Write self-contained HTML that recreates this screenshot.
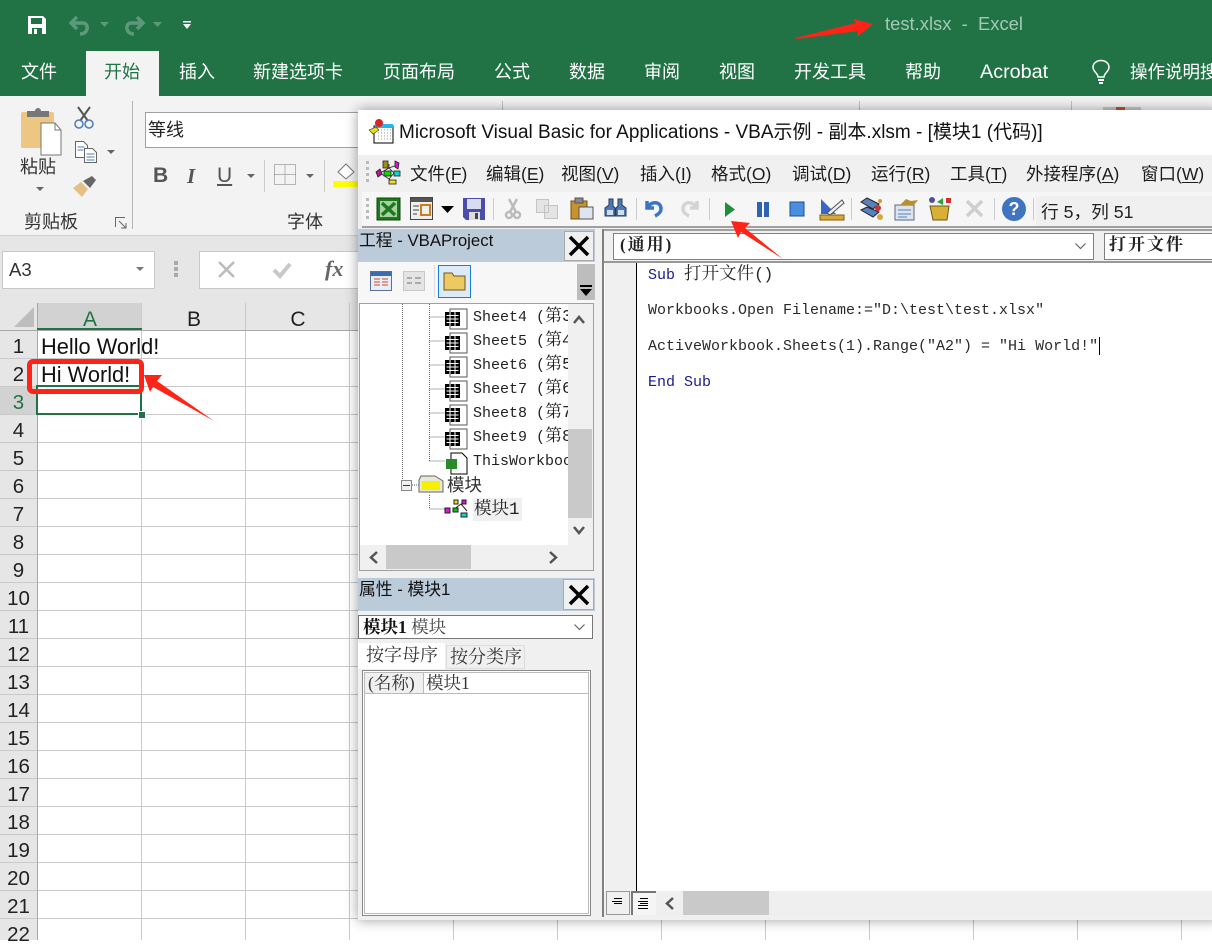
<!DOCTYPE html>
<html><head><meta charset="utf-8"><style>
html,body{margin:0;padding:0}
body{width:1212px;height:940px;overflow:hidden;position:relative;background:#fff;font-family:"Liberation Sans","Noto Sans CJK SC",sans-serif;color:#222}
.a{position:absolute}
.t{position:absolute;white-space:nowrap}
.tab{color:#fff;font-size:18px;line-height:24px;top:60px}
.m{font-family:"Liberation Mono","Noto Serif CJK SC",monospace;font-size:15px;line-height:20px}
.menu{font-size:17.5px;line-height:24px;top:162px;color:#1c1c1c}
.menu u{text-underline-offset:2px}
.code{left:648px;color:#2a2a2a}
.row{left:0;width:37px;text-align:center;font-size:20.5px;line-height:28px;color:#222;height:28px;font-family:"Liberation Sans","Noto Sans CJK SC",sans-serif}
svg{position:absolute;overflow:visible}
</style></head><body>
<!-- title bar -->
<div class="a" style="left:0;top:0;width:1212px;height:96px;background:#217346"></div>
<svg style="left:26px;top:15px" width="22" height="20" viewBox="0 0 20 20"><path d="M1 1h15l3 3v15H1z" fill="#fff"/><path d="M4 3h11v6H4z" fill="#217346"/><path d="M5 13h10v6H5z" fill="#217346"/><path d="M7 14h3v5H7z" fill="#fff"/></svg>
<svg style="left:68px;top:15px" width="24" height="21" viewBox="0 0 24 21" fill="none" stroke="#5a9a7a" stroke-width="3.5"><path d="M9 2L3 8l6 6M3 8h12c6 0 6 11-3 11"/></svg>
<svg style="left:100px;top:22px" width="9" height="6"><path d="M0 0h9L4.500 5z" fill="#5a9a7a"/></svg>
<svg style="left:122px;top:15px" width="24" height="21" viewBox="0 0 24 21" fill="none" stroke="#5a9a7a" stroke-width="3.500"><path d="M15 2l6 6-6 6M21 8H9c-6 0-6 11 3 11"/></svg>
<svg style="left:153px;top:22px" width="9" height="6"><path d="M0 0h9L4.500 5z" fill="#5a9a7a"/></svg>
<svg style="left:183px;top:21px" width="8" height="9"><path d="M0 0h8v1.500H0zM0 3h8L4 8z" fill="#fff"/></svg>
<span class="t" style="left:885px;top:12px;font-size:18.400px;line-height:24px;color:#a3c9b5;white-space:pre">test.xlsx  -  Excel</span>
<div class="a" style="left:86px;top:51px;width:73px;height:45px;background:#f3f3f3"></div>
<span class="t tab" style="left:21px">文件</span>
<span class="t tab" style="left:104px;color:#217346">开始</span>
<span class="t tab" style="left:179px">插入</span>
<span class="t tab" style="left:253px">新建选项卡</span>
<span class="t tab" style="left:383px">页面布局</span>
<span class="t tab" style="left:494px">公式</span>
<span class="t tab" style="left:569px">数据</span>
<span class="t tab" style="left:644px">审阅</span>
<span class="t tab" style="left:719px">视图</span>
<span class="t tab" style="left:794px">开发工具</span>
<span class="t tab" style="left:905px">帮助</span>
<span class="t tab" style="left:980px;font-size:19.800px">Acrobat</span>
<span class="t tab" style="left:1130px;font-size:17.500px">操作说明搜索</span>
<svg style="left:1091px;top:60px" width="20" height="26" viewBox="0 0 20 26" fill="none" stroke="#fff" stroke-width="1.500"><path d="M7 17c0-4-5-5-5-10a8 6.500 0 0 1 16 0c0 5-5 6-5 10z"/><path d="M7 20h6M8 23h4" stroke-width="2"/></svg>
<!-- ribbon -->
<div class="a" style="left:0;top:96px;width:1212px;height:140px;background:#f3f3f3;border-bottom:1px solid #d2d2d2;box-sizing:border-box"></div>
<div class="a" style="left:132px;top:101px;width:1px;height:128px;background:#b5b5b5"></div>
<div class="a" style="left:502px;top:101px;width:1px;height:10px;background:#c0c0c0"></div>
<div class="a" style="left:859px;top:101px;width:1px;height:10px;background:#c0c0c0"></div>
<div class="a" style="left:1071px;top:101px;width:1px;height:10px;background:#c0c0c0"></div>
<div class="a" style="left:1103px;top:107px;width:38px;height:4px;background:#c9c9c9"></div>
<div class="a" style="left:1116px;top:107px;width:9px;height:4px;background:#c5512f"></div>
<svg style="left:20px;top:106px" width="44" height="48" viewBox="0 0 44 48"><rect x="1" y="6" width="33" height="36" rx="2" fill="#edc681"/><path d="M7 5h8a3 3 0 0 1 6 0h8v6H7z" fill="#777"/><path d="M21 19h14l6 7v25H21z" transform="translate(0 -2)" fill="#fff" stroke="#777"/><path d="M35 17v7h6" fill="none" stroke="#777"/></svg>
<span class="t" style="left:20px;top:155px;font-size:18px;line-height:24px;color:#333">粘贴</span>
<svg style="left:36px;top:187px" width="9" height="6"><path d="M0 0h8L4 4z" fill="#666"/></svg>
<svg style="left:73px;top:105px" width="22" height="24" viewBox="0 0 22 24" fill="none"><path d="M5 2l10 14M17 2L7 16" stroke="#555" stroke-width="2"/><circle cx="6" cy="19" r="4" stroke="#4b7db5" stroke-width="1.500"/><circle cx="16" cy="19" r="4" stroke="#4b7db5" stroke-width="1.500"/></svg>
<svg style="left:74px;top:140px" width="24" height="24" viewBox="0 0 24 24" fill="#fff" stroke="#666"><path d="M1.500 1.500h8l4 4v12h-12z"/><path d="M10.500 8.500h8l4 4v10h-12z"/><path d="M3.500 7h7M3.500 10h6M12.500 14h8M12.500 17h8M12.500 20h8" stroke="#4b7db5"/></svg>
<svg style="left:107px;top:150px" width="8" height="6"><path d="M0 0h8L4 4z" fill="#666"/></svg>
<svg style="left:73px;top:176px" width="24" height="22" viewBox="0 0 24 22"><path d="M0 12l8-6 7 7-6 8z" fill="#e6bf82"/><path d="M10 5l9-5 4 4-6 8z" fill="#666"/></svg>
<span class="t" style="left:24px;top:211px;font-size:18px;line-height:22px;color:#333">剪贴板</span>
<svg style="left:115px;top:217px" width="12" height="12" fill="none" stroke="#666"><path d="M.5 10V.5H10M4 4l7 7M11 6v5H6"/></svg>
<div class="a" style="left:145px;top:112px;width:230px;height:34px;background:#fff;border:1px solid #a0a0a0"></div>
<span class="t" style="left:148px;top:118px;font-size:18px;line-height:24px;color:#222">等线</span>
<span class="t" style="left:153px;top:163px;font-size:21px;line-height:26px;font-weight:bold;color:#555">B</span>
<span class="t" style="left:187px;top:163px;font-size:21px;line-height:26px;font-style:italic;font-family:'Liberation Serif',serif;font-weight:bold;color:#555">I</span>
<span class="t" style="left:217px;top:163px;font-size:21px;line-height:26px;color:#555;text-decoration:underline">U</span>
<svg style="left:247px;top:174px" width="8" height="5"><path d="M0 0h8L4 4z" fill="#666"/></svg>
<div class="a" style="left:264px;top:160px;width:1px;height:32px;background:#ccc"></div>
<svg style="left:274px;top:164px" width="22" height="21" fill="none" stroke="#777" stroke-dasharray="1 1"><path d="M.5.500h21v20H.500zM11 .5v20M.5 10.500h21"/></svg>
<svg style="left:306px;top:174px" width="8" height="5"><path d="M0 0h8L4 4z" fill="#666"/></svg>
<div class="a" style="left:324px;top:160px;width:1px;height:32px;background:#ccc"></div>
<svg style="left:336px;top:162px" width="22" height="18" fill="none" stroke="#777"><path d="M2 10l8-8 8 8-8 7z" fill="#fff"/></svg>
<div class="a" style="left:333px;top:181px;width:26px;height:6px;background:#ffff00"></div>
<span class="t" style="left:287px;top:210px;font-size:18px;line-height:24px;color:#333">字体</span>
<!-- formula bar -->
<div class="a" style="left:0;top:236px;width:1212px;height:67px;background:#e6e6e6"></div>
<div class="a" style="left:2px;top:251px;width:151px;height:36px;background:#fff;border:1px solid #c8c8c8"></div>
<span class="t" style="left:9px;top:258px;font-size:18.500px;line-height:24px;color:#333">A3</span>
<svg style="left:136px;top:267px" width="9" height="6"><path d="M0 0h8L4 4z" fill="#777"/></svg>
<div class="a" style="left:174px;top:261px;width:4px;height:4px;background:#aaa;box-shadow:0 6px 0 #aaa,0 12px 0 #aaa"></div>
<div class="a" style="left:199px;top:251px;width:170px;height:36px;background:#fff;border:1px solid #c8c8c8"></div>
<svg style="left:218px;top:261px" width="18" height="17" stroke="#bbb" stroke-width="2.500"><path d="M1 1l15 15M16 1L1 16"/></svg>
<svg style="left:272px;top:262px" width="20" height="17" fill="none" stroke="#c8c8c8" stroke-width="4"><path d="M2 8l6 6L18 2"/></svg>
<span class="t" style="left:325px;top:256px;font-family:'Liberation Serif',serif;font-style:italic;font-weight:bold;font-size:22px;line-height:26px;color:#666">fx</span>
<!-- grid -->
<svg style="left:0;top:303px" width="1212" height="637" shape-rendering="crispEdges">
<rect width="1212" height="27" fill="#e6e6e6"/>
<rect width="37" height="637" fill="#e6e6e6"/>
<rect x="37" width="104" height="27" fill="#d2d2d2"/>
<rect y="83" width="37" height="28" fill="#d2d2d2"/>
<g stroke="#c9c9c9"><path d="M37.500 27V637M141.500 0V637M245.500 0V637M349.500 0V637M453.500 0V637M557.500 0V637M661.500 0V637M765.500 0V637M869.500 0V637M973.500 0V637M1077.500 0V637M1181.500 0V637"/>
<path d="M0 55.500H1212M0 83.500H1212M0 111.500H1212M0 139.500H1212M0 167.500H1212M0 195.500H1212M0 223.500H1212M0 251.500H1212M0 279.500H1212M0 307.500H1212M0 335.500H1212M0 363.500H1212M0 391.500H1212M0 419.500H1212M0 447.500H1212M0 475.500H1212M0 503.500H1212M0 531.500H1212M0 559.500H1212M0 587.500H1212M0 615.500H1212"/></g>
<path d="M0 27.500H1212" stroke="#a8a8a8"/>
<path d="M37.500 0V637" stroke="#a8a8a8"/>
<rect x="37" y="25" width="105" height="2" fill="#217346"/>
<path d="M34 4v20H14z" fill="#bdbdbd" shape-rendering="auto"/>
</svg>
<span class="t" style="left:38px;top:306px;width:104px;text-align:center;font-size:21px;line-height:27px;color:#217346">A</span>
<span class="t" style="left:142px;top:306px;width:104px;text-align:center;font-size:21px;line-height:27px">B</span>
<span class="t" style="left:246px;top:306px;width:104px;text-align:center;font-size:21px;line-height:27px">C</span>
<span class="t row" style="top:333px">1</span><span class="t row" style="top:361px">2</span><span class="t row" style="top:389px;color:#217346">3</span><span class="t row" style="top:417px">4</span><span class="t row" style="top:445px">5</span><span class="t row" style="top:473px">6</span><span class="t row" style="top:501px">7</span><span class="t row" style="top:529px">8</span><span class="t row" style="top:557px">9</span><span class="t row" style="top:585px">10</span><span class="t row" style="top:613px">11</span><span class="t row" style="top:641px">12</span><span class="t row" style="top:669px">13</span><span class="t row" style="top:697px">14</span><span class="t row" style="top:725px">15</span><span class="t row" style="top:753px">16</span><span class="t row" style="top:781px">17</span><span class="t row" style="top:809px">18</span><span class="t row" style="top:837px">19</span><span class="t row" style="top:865px">20</span><span class="t row" style="top:893px">21</span><span class="t row" style="top:921px">22</span>
<span class="t" style="left:41px;top:333px;font-size:21.800px;line-height:28px;color:#111">Hello World!</span>
<span class="t" style="left:41px;top:361px;font-size:21.800px;line-height:28px;color:#111">Hi World!</span>
<div class="a" style="left:36px;top:385px;width:106px;height:30px;border:2px solid #217346;box-sizing:border-box"></div>
<div class="a" style="left:138px;top:411px;width:6px;height:6px;background:#217346;border:1px solid #fff"></div>
<div class="a" style="left:27px;top:359px;width:117px;height:35px;border:5px solid #ff2318;border-radius:6px;box-sizing:border-box"></div>
<svg style="left:0;top:0" width="1212" height="940"><path d="M144 375L162 375L157 381L214 421L153 387L150 392z" fill="#ff2318"/></svg>
<!-- VBA window -->
<div class="a" style="left:358px;top:110px;width:860px;height:810px;background:#f0f0f0;box-shadow:0 0 12px rgba(0,0,0,.4)"></div>
<div class="a" style="left:358px;top:110px;width:854px;height:45px;background:#fff"></div>
<svg style="left:369px;top:119px" width="26" height="26" viewBox="0 0 26 26"><rect x="5" y="7" width="19" height="17" fill="#fff" stroke="#000"/><rect x="6" y="5" width="18" height="4" fill="#22b8ec"/><path d="M9 11h14M9 14h14M9 17h14M9 20h14" stroke="#999" stroke-dasharray="1 2"/><circle cx="10" cy="4" r="4" fill="#d22"/><path d="M0 11l7-3 3 3-6 4z" fill="#e8d820" stroke="#333" stroke-width=".6"/></svg>
<span class="t" style="left:399px;top:120px;font-size:19px;line-height:25px;color:#111">Microsoft Visual Basic for Applications - VBA示例 - 副本.xlsm - [模块1 (代码)]</span>
<div class="a" style="left:358px;top:155px;width:854px;height:36px;background:#f0f0f0"></div>
<div class="a" style="left:366px;top:161px;width:3px;height:3px;background:#bbb;box-shadow:0 6px 0 #bbb,0 12px 0 #bbb,0 18px 0 #bbb"></div>
<svg style="left:374px;top:160px" width="27" height="25" viewBox="0 0 27 25" stroke="#222" stroke-width=".8"><path d="M6 13L15 8l5 5-5 6zM15 8V4M15 8l8-3M20 13h4M15 19l4 3" fill="none"/><path d="M2 12l4-3 2 5-4 3z" fill="#c010a0"/><rect x="9" y="1" width="5" height="7" fill="#a09010"/><path d="M21 1l4 2-1 6-3-2z" fill="#e010e0"/><rect x="10" y="11" width="7" height="5" fill="#10d010"/><rect x="20" y="11" width="6" height="5" fill="#10d0d0"/><rect x="15" y="20" width="7" height="4" fill="#e8e020"/></svg>
<span class="t menu" style="left:410px">文件(<u>F</u>)</span>
<span class="t menu" style="left:486px">编辑(<u>E</u>)</span>
<span class="t menu" style="left:561px">视图(<u>V</u>)</span>
<span class="t menu" style="left:640px">插入(<u>I</u>)</span>
<span class="t menu" style="left:711px">格式(<u>O</u>)</span>
<span class="t menu" style="left:792px">调试(<u>D</u>)</span>
<span class="t menu" style="left:871px">运行(<u>R</u>)</span>
<span class="t menu" style="left:950px">工具(<u>T</u>)</span>
<span class="t menu" style="left:1026px">外接程序(<u>A</u>)</span>
<span class="t menu" style="left:1141px">窗口(<u>W</u>)</span>
<!-- toolbar -->
<div class="a" style="left:362px;top:192px;width:850px;height:36px;background:#f6f6f6;border-bottom:2px solid #a0a0a0;box-sizing:border-box"></div>
<div class="a" style="left:1036px;top:196px;width:176px;height:30px;background:#f0f0f0"></div>
<div class="a" style="left:366px;top:198px;width:3px;height:3px;background:#bbb;box-shadow:0 6px 0 #bbb,0 12px 0 #bbb,0 18px 0 #bbb"></div>
<svg style="left:376px;top:197px" width="25" height="24" viewBox="0 0 25 24"><rect x="1" y="1" width="23" height="22" fill="#1c7a1c" stroke="#0a4a0a"/><rect x="4" y="4" width="17" height="16" fill="#a8cfa8"/><path d="M6 6l13 12M19 6L6 18" stroke="#1c7a1c" stroke-width="3.500"/></svg>
<svg style="left:410px;top:197px" width="23" height="23" viewBox="0 0 23 23"><rect x=".5" y=".5" width="22" height="22" fill="#efefef" stroke="#444"/><rect x="1" y="1" width="21" height="4" fill="#555"/><path d="M3 9h6M3 13h6M3 17h4" stroke="#999" stroke-width="2"/><rect x="11" y="8" width="9" height="10" fill="none" stroke="#c87f20" stroke-width="2"/></svg>
<svg style="left:441px;top:206px" width="13" height="7"><path d="M0 0h13L6.500 7z" fill="#000"/></svg>
<svg style="left:463px;top:198px" width="22" height="22" viewBox="0 0 22 22"><path d="M0 0h22v22H3L0 19z" fill="#4a4ea8"/><rect x="4" y="1" width="14" height="10" fill="#d8dcf0"/><rect x="6" y="14" width="11" height="8" fill="#ddd"/><rect x="12" y="15" width="3" height="6" fill="#444"/></svg>
<div class="a" style="left:493px;top:198px;width:1px;height:22px;background:#ccc"></div>
<svg style="left:505px;top:198px" width="16" height="22" fill="none" stroke="#bbb" stroke-width="2.500"><path d="M4 1l7 13M12 1L5 14"/><circle cx="4" cy="17" r="3"/><circle cx="12" cy="17" r="3"/></svg>
<svg style="left:536px;top:199px" width="22" height="20" fill="#e4e4e4" stroke="#c4c4c4"><path d="M.5.500h12v13H.500zM8.500 6.500h13v13h-13z"/></svg>
<svg style="left:570px;top:198px" width="24" height="22" viewBox="0 0 24 22"><rect x="1" y="3" width="16" height="18" fill="#c8922e" stroke="#705010"/><rect x="5" y="0" width="8" height="5" fill="#888" stroke="#555"/><rect x="9" y="9" width="14" height="12" fill="#dfe5ee" stroke="#555"/></svg>
<svg style="left:604px;top:198px" width="23" height="22" viewBox="0 0 23 22"><path d="M5 1h4v7l2 2v8H1v-8l4-3zM14 1h4v6l4 3v8H12v-8l2-2z" fill="#5078b0" stroke="#223a66"/><rect x="3" y="12" width="6" height="5" fill="#cde"/><rect x="14" y="12" width="6" height="5" fill="#cde"/></svg>
<div class="a" style="left:636px;top:198px;width:1px;height:22px;background:#ccc"></div>
<svg style="left:645px;top:198px" width="20" height="20" fill="none" stroke="#3a76c4" stroke-width="3.500"><path d="M2 3v7h7M3 9c3-6 13-6 13 2 0 3-2 5-6 7"/></svg>
<svg style="left:679px;top:198px" width="20" height="20" fill="none" stroke="#d4d4d4" stroke-width="3.500"><path d="M18 3v7h-7M17 9c-3-6-13-6-13 2 0 3 2 5 6 7"/></svg>
<div class="a" style="left:709px;top:198px;width:1px;height:22px;background:#ccc"></div>
<svg style="left:725px;top:202px" width="10" height="15"><path d="M0 0l10 7.500L0 15z" fill="#1f8f3c"/></svg>
<svg style="left:757px;top:202px" width="13" height="15"><rect x="0" width="5" height="15" fill="#2f62b0"/><rect x="7" width="5" height="15" fill="#2f62b0"/></svg>
<svg style="left:790px;top:202px" width="15" height="15"><rect width="14" height="14" fill="#4a8ee0" stroke="#1f4d95"/></svg>
<svg style="left:819px;top:197px" width="26" height="24" viewBox="0 0 26 24"><rect x="1" y="18" width="24" height="5" fill="#d8a838" stroke="#806010"/><path d="M2 2v15h15z" fill="#3a66c8"/><path d="M8 16L23 3l2 3L11 18z" fill="#eee" stroke="#555"/></svg>
<div class="a" style="left:851px;top:198px;width:1px;height:22px;background:#ccc"></div>
<svg style="left:860px;top:197px" width="24" height="24" viewBox="0 0 24 24"><path d="M1 5l6-4 12 6-6 5zM1 13l6-3 12 5-6 5z" fill="#5a80b8" stroke="#223"/><circle cx="20" cy="4" r="2" fill="#cda02c"/><circle cx="18" cy="11" r="3" fill="#d03030"/><circle cx="20" cy="20" r="3" fill="#d8a838"/></svg>
<svg style="left:894px;top:197px" width="25" height="24" viewBox="0 0 25 24"><rect x="1" y="8" width="19" height="15" fill="#dbe4f0" stroke="#5a6a80"/><path d="M4 13h13M4 17h13M4 20h9" stroke="#5a80b8"/><path d="M6 8l6-6 5 2 7-1-4 5z" fill="#b89030"/></svg>
<svg style="left:927px;top:197px" width="25" height="24" viewBox="0 0 25 24"><path d="M3 9h19l-2 14H6z" fill="#d8b038" stroke="#705a10"/><circle cx="5" cy="3" r="3" fill="#5050a0"/><path d="M10 5l6-4v7z" fill="#2aa040"/><rect x="19" y="1" width="5" height="5" fill="#d03030"/></svg>
<svg style="left:964px;top:198px" width="21" height="20" fill="none" stroke="#cfcfcf" stroke-width="3.500"><path d="M3 3l15 15M18 3L3 18"/></svg>
<div class="a" style="left:994px;top:198px;width:1px;height:22px;background:#ccc"></div>
<div class="t" style="left:1002px;top:197px;width:24px;height:24px;border-radius:50%;background:#3f75c0;color:#fff;font-weight:bold;font-size:18px;line-height:24px;text-align:center">?</div>
<div class="a" style="left:1033px;top:198px;width:1px;height:22px;background:#ccc"></div>
<span class="t" style="left:1041px;top:200px;font-size:17.700px;line-height:24px;color:#222">行 5，列 51</span>
<!-- project pane -->
<div class="a" style="left:358px;top:229px;width:237px;height:33px;background:#bccbda"></div>
<span class="t" style="left:359px;top:230px;font-size:16.800px;line-height:22px;color:#111">工程 - VBAProject</span>
<div class="a" style="left:564px;top:231px;width:30px;height:30px;background:#f0f0f0;border:1px solid #aaa;box-sizing:border-box"></div>
<svg style="left:569px;top:236px" width="20" height="20" stroke="#000" stroke-width="3.500"><path d="M1 1l18 18M19 1L1 19"/></svg>
<div class="a" style="left:358px;top:262px;width:237px;height:41px;background:#f7f7f7"></div>
<svg style="left:370px;top:271px" width="22" height="20" viewBox="0 0 22 20"><rect x=".5" y=".5" width="21" height="19" fill="#e8eef6" stroke="#5a7098"/><rect x="1" y="1" width="20" height="4" fill="#3a6cb0"/><path d="M4 8h6M12 8h6M4 11h6M12 11h6M4 14h6M12 14h6" stroke="#d04a2a"/></svg>
<svg style="left:403px;top:271px" width="22" height="20" viewBox="0 0 22 20" fill="#e4e4e4" stroke="#c8c8c8"><rect x=".5" y=".5" width="21" height="19"/><path d="M4 7h5M12 7h6M4 12h5M12 12h6" stroke="#aaa" stroke-width="2"/></svg>
<div class="a" style="left:434px;top:265px;width:1px;height:32px;background:#ddd"></div>
<div class="a" style="left:438px;top:265px;width:33px;height:33px;background:#dcebf7;border:1px solid #1c7ed0;box-sizing:border-box"></div>
<svg style="left:443px;top:271px" width="23" height="20" viewBox="0 0 23 20"><path d="M1 2h8l2 3h11v14H1z" fill="#eec860" stroke="#6b5a24"/></svg>
<div class="a" style="left:577px;top:264px;width:18px;height:36px;background:#bdbdbd"></div>
<svg style="left:579px;top:285px" width="14" height="12"><path d="M1 0h12v2H1zM1 4h12L7 11z" fill="#000"/></svg>
<div class="a" style="left:359px;top:303px;width:235px;height:268px;background:#f0f0f0;border:1px solid #a0a0a0;box-sizing:border-box"></div>
<div class="a" style="left:360px;top:304px;width:208px;height:241px;background:#fff;overflow:hidden">
<svg style="left:-360px;top:-304px" width="600" height="600" fill="none" stroke="#666" stroke-dasharray="1 1" shape-rendering="crispEdges">
<path d="M402.500 304V479M429.500 304V461M429.500 317H445M429.500 341H445M429.500 365H445M429.500 389H445M429.500 413H445M429.500 437H445M429.500 461H445M412 485H420M429.500 495V509H445"/></svg>
<span class="t m" style="left:113px;top:4px;white-space:pre">Sheet4 (<span style="font-size:17px">第3</span></span>
<span class="t m" style="left:113px;top:28px;white-space:pre">Sheet5 (<span style="font-size:17px">第4</span></span>
<span class="t m" style="left:113px;top:52px;white-space:pre">Sheet6 (<span style="font-size:17px">第5</span></span>
<span class="t m" style="left:113px;top:76px;white-space:pre">Sheet7 (<span style="font-size:17px">第6</span></span>
<span class="t m" style="left:113px;top:100px;white-space:pre">Sheet8 (<span style="font-size:17px">第7</span></span>
<span class="t m" style="left:113px;top:124px;white-space:pre">Sheet9 (<span style="font-size:17px">第8</span></span>
<span class="t m" style="left:113px;top:148px;white-space:pre">ThisWorkbook</span>
<span class="t" style="left:87px;top:170px;font-size:17.500px;line-height:22px;color:#333">模块</span>
<div class="a" style="left:113px;top:194px;width:49px;height:23px;background:#f0f0f0"></div>
<span class="t m" style="left:114px;top:196px;font-size:17.500px">模块1</span>
<svg style="left:85px;top:5px" width="24" height="160" viewBox="0 0 24 160">
<defs><g id="s"><rect x="5" y="0" width="17" height="20" fill="#fff" stroke="#555"/><rect x="0" y="3" width="15" height="14" fill="#000"/><path d="M1.500 6.500h12M1.500 10h12M1.500 13.500h12M5 3v14M10 3v14" stroke="#fff" fill="none"/></g></defs>
<use href="#s"/><use href="#s" y="24"/><use href="#s" y="48"/><use href="#s" y="72"/><use href="#s" y="96"/><use href="#s" y="120"/>
<path d="M6 144h11l5 5v16H6z" fill="#fff" stroke="#000"/><path d="M1 150h11v10H1z" fill="#2a8a2a"/></svg>
<div class="a" style="left:41px;top:176px;width:11px;height:11px;background:#f0f0f0;border:1px solid #888;box-sizing:border-box"></div>
<div class="a" style="left:43px;top:181px;width:7px;height:1px;background:#335"></div>
<svg style="left:58px;top:171px" width="27" height="19"><path d="M3 1h14l8 5v11H1V5z" fill="#e8e8d8" stroke="#666"/><rect x="4" y="6" width="18" height="9" fill="#f5f000"/></svg>
<svg style="left:85px;top:193px" width="24" height="22"><path d="M8 13l8-6 6 7" fill="none" stroke="#222"/><rect x="0" y="11" width="5" height="5" fill="#e010e0" stroke="#222"/><rect x="9" y="3" width="4" height="4" fill="#f0e010" stroke="#222"/><rect x="17" y="3" width="4" height="4" fill="#e010e0" stroke="#222"/><rect x="8" y="11" width="5" height="4" fill="#10c010" stroke="#222"/><rect x="16" y="16" width="6" height="4" fill="#10d0d0" stroke="#222"/></svg>
</div>
<div class="a" style="left:568px;top:429px;width:24px;height:89px;background:#c9c9c9"></div>
<svg style="left:572px;top:315px" width="14" height="9" fill="none" stroke="#555" stroke-width="2.500"><path d="M2 8l5-6 5 6"/></svg>
<svg style="left:572px;top:526px" width="14" height="9" fill="none" stroke="#555" stroke-width="2.500"><path d="M2 1l5 6 5-6"/></svg>
<div class="a" style="left:386px;top:545px;width:85px;height:24px;background:#c9c9c9"></div>
<svg style="left:369px;top:551px" width="10" height="13" fill="none" stroke="#555" stroke-width="2.500"><path d="M8 1L2 6.500 8 12"/></svg>
<svg style="left:548px;top:551px" width="10" height="13" fill="none" stroke="#555" stroke-width="2.500"><path d="M2 1l6 5.500L2 12"/></svg>
<!-- properties -->
<div class="a" style="left:358px;top:578px;width:237px;height:33px;background:#bccbda"></div>
<span class="t" style="left:359px;top:579px;font-size:16.800px;line-height:22px;color:#111">属性 - 模块1</span>
<div class="a" style="left:563px;top:579px;width:31px;height:31px;background:#f0f0f0;border:1px solid #aaa;box-sizing:border-box"></div>
<svg style="left:569px;top:585px" width="20" height="20" stroke="#000" stroke-width="3.500"><path d="M1 1l18 18M19 1L1 19"/></svg>
<div class="a" style="left:358px;top:615px;width:235px;height:24px;background:#fff;border:1px solid #777;box-sizing:border-box"></div>
<span class="t" style="left:363px;top:616px;font-family:'Liberation Serif','Noto Serif CJK SC',serif;font-size:17.500px;line-height:22px;color:#111"><b>模块1</b> <span style="color:#444">模块</span></span>
<svg style="left:574px;top:624px" width="11" height="7" fill="none" stroke="#666" stroke-width="1.200"><path d="M.5.500l5 5 5-5"/></svg>
<div class="a" style="left:358px;top:643px;width:87px;height:26px;background:#fff"></div>
<div class="a" style="left:446px;top:645px;width:79px;height:24px;background:#f0f0f0;border:1px solid #ddd;box-sizing:border-box"></div>
<span class="t" style="left:366px;top:644px;font-family:'Liberation Serif','Noto Serif CJK SC',serif;font-size:18px;line-height:23px;color:#333">按字母序</span>
<span class="t" style="left:450px;top:646px;font-family:'Liberation Serif','Noto Serif CJK SC',serif;font-size:18px;line-height:23px;color:#333">按分类序</span>
<div class="a" style="left:362px;top:670px;width:229px;height:246px;background:#fff;border:1px solid #888;outline:1px solid #bbb;outline-offset:-3px;box-sizing:border-box"></div>
<div class="a" style="left:365px;top:673px;width:58px;height:20px;background:#f0f0f0"></div>
<div class="a" style="left:365px;top:693px;width:223px;height:1px;background:#bbb"></div>
<div class="a" style="left:423px;top:673px;width:1px;height:20px;background:#bbb"></div>
<span class="t" style="left:368px;top:672px;font-family:'Liberation Serif','Noto Serif CJK SC',serif;font-size:17.500px;line-height:22px;color:#333">(名称)</span>
<span class="t" style="left:426px;top:672px;font-family:'Liberation Serif','Noto Serif CJK SC',serif;font-size:17.500px;line-height:22px;color:#333">模块1</span>
<!-- code pane -->
<div class="a" style="left:602px;top:229px;width:610px;height:2px;background:#a0a0a0"></div>
<div class="a" style="left:602px;top:229px;width:2px;height:688px;background:#808080"></div>
<div class="a" style="left:613px;top:233px;width:481px;height:27px;background:#fff;border:1px solid #808080;box-sizing:border-box"></div>
<span class="t" style="left:620px;top:233px;font-family:'Liberation Serif','Noto Serif CJK SC',serif;font-weight:bold;font-size:17px;line-height:24px;letter-spacing:2px;color:#222">(通用)</span>
<svg style="left:1075px;top:243px" width="11" height="7" fill="none" stroke="#666" stroke-width="1.200"><path d="M.5.500l5 5 5-5"/></svg>
<div class="a" style="left:1104px;top:233px;width:120px;height:27px;background:#fff;border:1px solid #808080;box-sizing:border-box"></div>
<span class="t" style="left:1109px;top:233px;font-family:'Liberation Serif','Noto Serif CJK SC',serif;font-weight:bold;font-size:17px;line-height:24px;letter-spacing:2px;color:#222">打开文件</span>
<div class="a" style="left:604px;top:261px;width:608px;height:2px;background:#999"></div>
<div class="a" style="left:604px;top:263px;width:608px;height:628px;background:#fff"></div>
<div class="a" style="left:605px;top:263px;width:31px;height:628px;background:#f0f0f0"></div>
<div class="a" style="left:636px;top:263px;width:1px;height:628px;background:#000"></div>
<span class="t m code" style="top:265px;white-space:pre"><span style="color:#1a1a8a">Sub</span> <span style="font-size:17.500px">打开文件</span><span style="letter-spacing:-1px;font-size:17px">()</span></span>
<span class="t m code" style="top:301px">Workbooks.Open Filename:="D:\test\test.xlsx"</span>
<span class="t m code" style="top:337px">ActiveWorkbook.Sheets(1).Range("A2") = "Hi World!"</span>
<div class="a" style="left:1099px;top:337px;width:1px;height:18px;background:#000"></div>
<span class="t m code" style="top:373px;color:#1a1a8a">End Sub</span>
<div class="a" style="left:604px;top:891px;width:608px;height:25px;background:#efefef"></div>
<div class="a" style="left:606px;top:891px;width:24px;height:24px;background:#f0f0f0;border:1px solid #999;box-sizing:border-box"></div>
<div class="a" style="left:631px;top:891px;width:25px;height:24px;background:#f5f5f5;border-left:2px solid #777;border-top:2px solid #777;box-sizing:border-box"></div>
<svg style="left:612px;top:898px" width="12" height="8" shape-rendering="crispEdges"><path d="M2 .5h8M0 3.500h10M2 5.500h8" stroke="#000" fill="none"/></svg>
<svg style="left:638px;top:898px" width="12" height="12" shape-rendering="crispEdges"><path d="M2 .5h8M0 3.500h10M2 5.500h8M0 7.500h10M0 10.500h10" stroke="#000" fill="none"/></svg>
<svg style="left:665px;top:897px" width="10" height="13" fill="none" stroke="#555" stroke-width="2.500"><path d="M8 1L2 6.500 8 12"/></svg>
<div class="a" style="left:683px;top:891px;width:86px;height:24px;background:#c9c9c9"></div>
<!-- arrows on top -->
<svg style="left:0;top:0" width="1212" height="940">
<path d="M795 38L856 23L853 19L873 24L857 37L858 31L797 39z" fill="#ff2318"/>
<path d="M731 221L750 223L745 228L783 259L741 232L738 238z" fill="#ff2318"/>
</svg>
</body></html>
